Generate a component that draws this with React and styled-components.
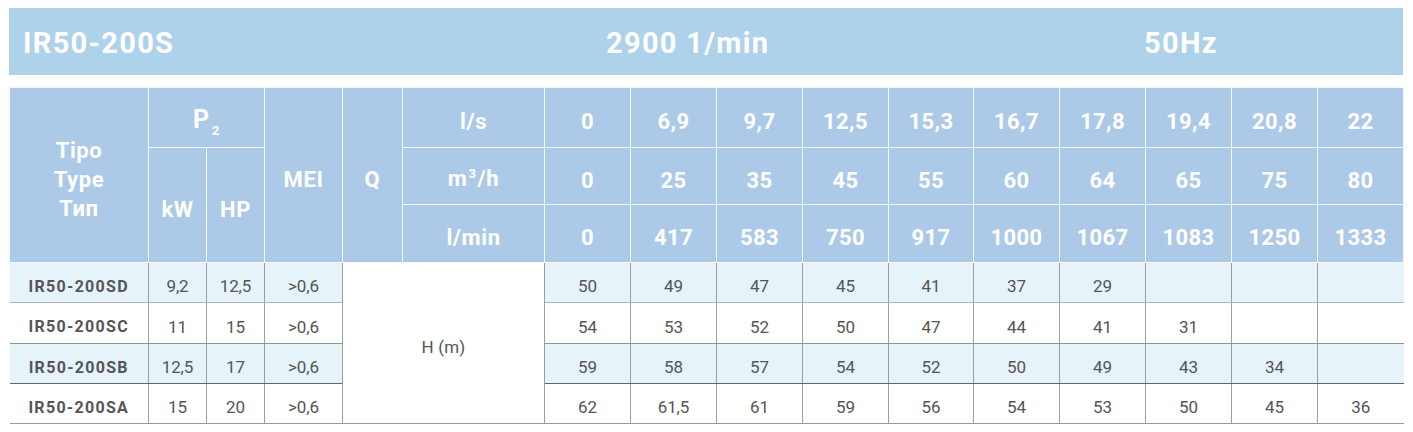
import React from 'react';
import styled, { createGlobalStyle } from 'styled-components';

const Global = createGlobalStyle`
  *, *::before, *::after { box-sizing: border-box; }
  html, body { margin: 0; padding: 0; background: #fff; }
  body { font-family: Roboto, "Liberation Sans", sans-serif; }
`;

const Page = styled.div`
  padding: 8px 10px 0 9px;
  width: 1413px;
`;

const TitleBar = styled.div`
  display: grid;
  grid-template-columns: 583px 538px auto;
  align-items: center;
  width: 1394px;
  height: 67px;
  padding: 3px 0 0 14px;
  background: #aed2ea;
  color: #fff;
  font-weight: 700;
  font-size: 29px;
  letter-spacing: 1.3px;
  white-space: nowrap;
`;

const Table = styled.table`
  margin-top: 12px;
  width: 1394px;
  table-layout: fixed;
  border-collapse: collapse;
  border-spacing: 0;
`;

const Th = styled.th`
  height: ${(p) => (p.$h ? `${p.$h}px` : 'auto')};
  background: #adc9e8;
  color: #fff;
  font-weight: 700;
  font-size: 22px;
  letter-spacing: ${(p) => (p.$num ? '0.4px' : '0.6px')};
  line-height: 29px;
  border: 1px solid #f4f8fc;
  padding: 8px 0 0;
  text-align: center;
  vertical-align: middle;
  white-space: nowrap;
`;

const PLabel = styled.span`
  font-size: 25px;
`;

const Sub = styled.span`
  font-size: 13px;
  position: relative;
  top: 7px;
  margin-left: 2px;
`;

const Sup = styled.span`
  font-size: 13px;
  position: relative;
  top: -8px;
  margin: 0 1px;
`;

const Td = styled.td`
  height: ${(p) => p.$h}px;
  background: ${(p) => (p.$shade ? '#e6f3f9' : '#fff')};
  color: #555;
  font-size: ${(p) => (p.$bold ? '16px' : '17px')};
  font-weight: ${(p) => (p.$bold ? 700 : 400)};
  letter-spacing: ${(p) => (p.$bold ? '1.3px' : '-0.1px')};
  border-top: none;
  border-left: ${(p) => (p.$first ? 'none' : '1px solid #9e9e9e')};
  border-right: ${(p) => (p.$last ? 'none' : '1px solid #9e9e9e')};
  border-bottom: 1px solid ${(p) => p.$line};
  padding: 7px 0 0;
  text-align: center;
  vertical-align: middle;
  white-space: nowrap;
`;

const HCell = styled(Td)`
  background: #fff;
  border-left: 1px solid #9e9e9e;
  border-right: 1px solid #9e9e9e;
  border-bottom: 1px solid #9a9a9a;
  padding-top: 8px;
  letter-spacing: 0.2px;
`;

const ls = ['0', '6,9', '9,7', '12,5', '15,3', '16,7', '17,8', '19,4', '20,8', '22'];
const m3h = ['0', '25', '35', '45', '55', '60', '64', '65', '75', '80'];
const lmin = ['0', '417', '583', '750', '917', '1000', '1067', '1083', '1250', '1333'];

const rows = [
  { type: 'IR50-200SD', kw: '9,2', hp: '12,5', mei: '>0,6', shade: true, h: 40, line: '#aab4bb',
    vals: ['50', '49', '47', '45', '41', '37', '29', '', '', ''] },
  { type: 'IR50-200SC', kw: '11', hp: '15', mei: '>0,6', shade: false, h: 41, line: '#8f9397',
    vals: ['54', '53', '52', '50', '47', '44', '41', '31', '', ''] },
  { type: 'IR50-200SB', kw: '12,5', hp: '17', mei: '>0,6', shade: true, h: 40, line: '#5e656c',
    vals: ['59', '58', '57', '54', '52', '50', '49', '43', '34', ''] },
  { type: 'IR50-200SA', kw: '15', hp: '20', mei: '>0,6', shade: false, h: 40, line: '#9a9a9a',
    vals: ['62', '61,5', '61', '59', '56', '54', '53', '50', '45', '36'] },
];

const colWidths = [139, 58, 58, 78, 60, 142, 86, 86, 86, 86, 85, 86, 86, 86, 86, 86];

export default function App() {
  return (
    <>
      <Global />
      <Page>
        <TitleBar>
          <span>IR50-200S</span>
          <span>2900 1/min</span>
          <span>50Hz</span>
        </TitleBar>
        <Table>
          <colgroup>
            {colWidths.map((w, i) => (
              <col key={i} style={{ width: w }} />
            ))}
          </colgroup>
          <thead>
            <tr>
              <Th rowSpan={3}>
                Tipo
                <br />
                Type
                <br />
                Тип
              </Th>
              <Th colSpan={2} $h={60}>
                <PLabel>P</PLabel>
                <Sub>2</Sub>
              </Th>
              <Th rowSpan={3}>MEI</Th>
              <Th rowSpan={3}>Q</Th>
              <Th $h={60}>l/s</Th>
              {ls.map((v, i) => (
                <Th key={i} $num>
                  {v}
                </Th>
              ))}
            </tr>
            <tr>
              <Th rowSpan={2}>kW</Th>
              <Th rowSpan={2}>HP</Th>
              <Th $h={57}>
                m<Sup>3</Sup>/h
              </Th>
              {m3h.map((v, i) => (
                <Th key={i} $num>
                  {v}
                </Th>
              ))}
            </tr>
            <tr>
              <Th $h={58}>l/min</Th>
              {lmin.map((v, i) => (
                <Th key={i} $num>
                  {v}
                </Th>
              ))}
            </tr>
          </thead>
          <tbody>
            {rows.map((r, ri) => (
              <tr key={r.type}>
                <Td $first $bold $shade={r.shade} $h={r.h} $line={r.line}>
                  {r.type}
                </Td>
                <Td $shade={r.shade} $h={r.h} $line={r.line}>
                  {r.kw}
                </Td>
                <Td $shade={r.shade} $h={r.h} $line={r.line}>
                  {r.hp}
                </Td>
                <Td $shade={r.shade} $h={r.h} $line={r.line}>
                  {r.mei}
                </Td>
                {ri === 0 && (
                  <HCell rowSpan={4} colSpan={2} $h={r.h} $line="#9a9a9a">
                    H (m)
                  </HCell>
                )}
                {r.vals.map((v, i) => (
                  <Td key={i} $last={i === 9} $shade={r.shade} $h={r.h} $line={r.line}>
                    {v}
                  </Td>
                ))}
              </tr>
            ))}
          </tbody>
        </Table>
      </Page>
    </>
  );
}
